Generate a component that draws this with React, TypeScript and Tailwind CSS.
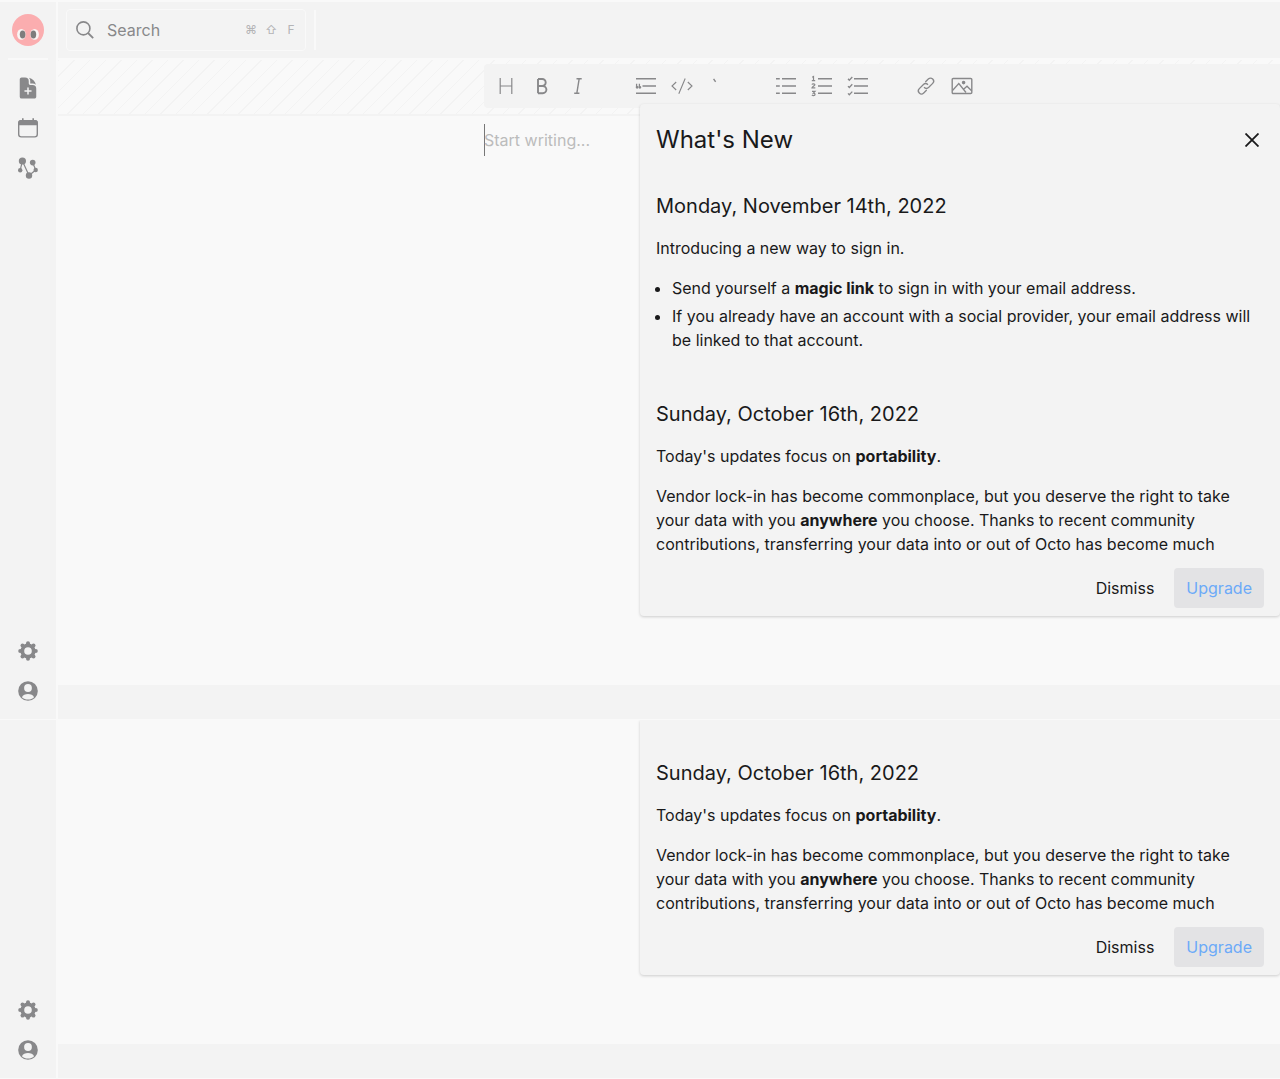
import type { ReactNode } from "react";
import { HiDocumentPlus } from "react-icons/hi2";

function Logo() {
  return (
    <svg viewBox="0 0 32 32" className="size-8" aria-hidden="true">
      <circle cx="16" cy="16" r="16" fill="#fbadaf" />
      <ellipse cx="9.4" cy="20.4" rx="4.3" ry="5.4" fill="#f9f5f4" />
      <ellipse cx="22.6" cy="20.4" rx="4.3" ry="5.4" fill="#f9f5f4" />
      <ellipse cx="10.6" cy="20.5" rx="2.8" ry="4" fill="#7d7d7d" />
      <ellipse cx="21.4" cy="20.5" rx="2.8" ry="4" fill="#7d7d7d" />
    </svg>
  );
}

function CalendarIcon() {
  return (
    <svg viewBox="0 0 24 24" className="size-6" fill="none" stroke="currentColor" aria-hidden="true">
      <rect x="2.7" y="4.7" width="18.6" height="16.2" rx="2.6" strokeWidth="1.4" />
      <path d="M2.2 9.2V7a3 3 0 0 1 3-3h13.6a3 3 0 0 1 3 3v2.2z" fill="currentColor" stroke="none" />
      <path d="M6.8 2.2V5M17.2 2.2V5" strokeWidth="1.6" />
    </svg>
  );
}

function GraphIcon() {
  return (
    <svg viewBox="0 0 24 24" className="size-6" fill="currentColor" stroke="currentColor" aria-hidden="true">
      <path d="M6.4 5 4.2 14.2M6.4 5 13 19.5M16.7 6.6l3 7.4L13 19.5" fill="none" strokeWidth="1.2" />
      <g stroke="none">
        <circle cx="6.4" cy="5" r="3.6" />
        <circle cx="16.7" cy="6.6" r="2.8" />
        <circle cx="4.2" cy="14.2" r="2.2" />
        <circle cx="19.7" cy="14" r="2.2" />
        <circle cx="13" cy="19.5" r="3.2" />
      </g>
    </svg>
  );
}

function GearIcon() {
  return (
    <svg viewBox="0 0 24 24" className="size-6" fill="currentColor" aria-hidden="true">
      <circle cx="12" cy="12" r="5.7" fill="none" stroke="currentColor" strokeWidth="3.8" />
      <circle cx="12" cy="4.2" r="2" />
      <circle cx="12" cy="19.8" r="2" />
      <circle cx="4.2" cy="12" r="2" />
      <circle cx="19.8" cy="12" r="2" />
      <circle cx="6.5" cy="6.5" r="2" />
      <circle cx="17.5" cy="6.5" r="2" />
      <circle cx="6.5" cy="17.5" r="2" />
      <circle cx="17.5" cy="17.5" r="2" />
    </svg>
  );
}

function AccountIcon() {
  return (
    <svg viewBox="0 0 24 24" className="size-6" aria-hidden="true">
      <circle cx="12" cy="12" r="9.8" fill="currentColor" />
      <circle cx="12" cy="9" r="3.9" fill="#f3f3f3" />
      <path d="M5.9 18.2c1-2 3.4-3.1 6.1-3.1s5.100 1.100 6.100 3.100c-1.600 1.600-3.800 2.400-6.100 2.400s-4.500-.8-6.100-2.400z" fill="#f3f3f3" />
    </svg>
  );
}

function SearchIcon() {
  return (
    <svg viewBox="0 0 20 20" className="size-5 shrink-0" fill="none" stroke="currentColor" aria-hidden="true">
      <circle cx="8.4" cy="8.400" r="6.500" strokeWidth="1.600" />
      <path d="M13 13l5.200 5.200" strokeWidth="1.800" />
    </svg>
  );
}

function SideButton({ label, children }: { label: string; children: ReactNode }) {
  return (
    <button type="button" aria-label={label} className="flex size-10 items-center justify-center text-[#88888a]">
      {children}
    </button>
  );
}

function AccountButtons() {
  return (
    <div className="flex flex-col items-center pb-2">
      <SideButton label="Settings"><GearIcon /></SideButton>
      <SideButton label="Account"><AccountIcon /></SideButton>
    </div>
  );
}

const rows = "M8 4.7h14M8 12h14M8 19.3h14";

const tools: { label: string; icon: ReactNode }[][] = [
  [
    { label: "Heading", icon: <path strokeWidth="1.2" d="M6.200 4v16M17.800 4v16M6.200 12h11.600" /> },
    { label: "Bold", icon: <path strokeWidth="1.9" d="M8 5v14.2M8 5h4.2a3.5 3.5 0 0 1 0 7H8M12.2 12h.6a3.6 3.6 0 0 1 0 7.2H8" /> },
    { label: "Italic", icon: <path strokeWidth="1.4" d="M10.5 4.7h5.2M8.2 19.3h5.2M13.2 4.7l-2.4 14.6" /> },
  ],
  [
    {
      label: "Quote",
      icon: (
        <>
          <path d="M2 4.7h20M8.5 12H22M2 19.3h20" />
          <path strokeWidth="1.3" d="M2.600 9.800v3.400M5.400 9.800v3.400" />
          <circle cx="3.100" cy="13.300" r=".7" />
          <circle cx="5.900" cy="13.300" r=".7" />
        </>
      ),
    },
    { label: "Code block", icon: <path strokeWidth="1.1" d="M6.2 8 2 12l4.2 4M17.8 8 22 12l-4.2 4M15.2 4.5 8.8 19.8" /> },
    { label: "Inline code", icon: <path strokeWidth="1.4" d="M7.6 4.8l2 3.1" /> },
  ],
  [
    { label: "Bulleted list", icon: <path d={`${rows}M2 4.7h3.8M2 12h3.8M2 19.3h3.8`} /> },
    {
      label: "Numbered list",
      icon: (
        <>
          <path d={rows} />
          <path
            strokeWidth="1.2"
            d="M2.2 3.3l1.3-.8v4.1M1.8 6.6h3.4M2 10.6c.2-.9 2.9-1 2.9.2 0 .9-2.7 1.7-2.9 3.1h3.3M2 17.4h3l-1.6 1.7c2.3 0 2.1 2.5.2 2.5-1 0-1.4-.3-1.7-.7"
          />
        </>
      ),
    },
    {
      label: "Task list",
      icon: (
        <>
          <path d={rows} />
          <path strokeWidth="1.3" d="M2 4.8l1.3 1.4 3-3.2M2 12.1l1.3 1.4 3-3.2M2 19.4l1.3 1.4 3-3.2" />
        </>
      ),
    },
  ],
  [
    {
      label: "Link",
      icon: (
        <path
          strokeWidth="1.3"
          d="M10 13.2a3.4 3.4 0 0 0 4.8.1l3.9-3.9a3.1 3.1 0 0 0-4.4-4.4l-3 3M14 10.8a3.4 3.4 0 0 0-4.8-.1l-3.9 3.9A3.1 3.1 0 0 0 9.7 19l3-3"
        />
      ),
    },
    {
      label: "Image",
      icon: (
        <>
          <rect x="2.2" y="4.5" width="19.6" height="15" rx="1" />
          <path strokeWidth="1.3" d="M2.5 16.5 8.8 9.6l7.2 8.9M13.6 15.2l3.4-3 4.8 4.8" />
          <circle cx="13.6" cy="8.6" r="1.1" fill="currentColor" />
        </>
      ),
    },
  ],
];

function Toolbar() {
  return (
    <div role="toolbar" aria-label="Formatting" className="flex h-11 min-w-0 items-center gap-8 overflow-hidden rounded-l bg-[#f3f3f3] px-1">
      {tools.map((group, i) => (
        <div key={i} className="flex shrink-0">
          {group.map((tool) => (
            <button key={tool.label} type="button" aria-label={tool.label} className="flex size-9 items-center justify-center text-[#88888a]">
              <svg viewBox="0 0 24 24" className="size-6" fill="none" stroke="currentColor" strokeWidth="1.4" aria-hidden="true">
                {tool.icon}
              </svg>
            </button>
          ))}
        </div>
      ))}
    </div>
  );
}

function OctoberEntry() {
  return (
    <article className="flex flex-col gap-4">
      <h2 className="text-xl leading-7">Sunday, October 16th, 2022</h2>
      <p>
        Today's updates focus on <strong>portability</strong>.
      </p>
      <p>
        Vendor lock-in has become commonplace, but you deserve the right to take your data with you{" "}
        <strong>anywhere</strong> you choose. Thanks to recent community contributions, transferring your data into or
        out of Octo has become much
      </p>
    </article>
  );
}

function Actions() {
  return (
    <div className="flex justify-end gap-2 pt-3 pb-2">
      <button type="button" className="h-10 rounded px-3">Dismiss</button>
      <button type="button" className="h-10 rounded bg-[#e3e3e5] px-3 text-[#6caaf8]">Upgrade</button>
    </div>
  );
}

function TopFrame() {
  return (
    <section className="relative flex min-h-[720px] border-b border-[#f9f9f9]">
      <nav aria-label="Main" className="mt-0.5 flex w-14 shrink-0 flex-col items-center justify-between bg-[#f3f3f3]">
        <div className="flex flex-col items-center pt-3">
          <a href="#home" aria-label="Octo home"><Logo /></a>
          <hr className="mt-3 mb-2 w-10 border-t-2 border-[#f9f9f9]" />
          <SideButton label="New note"><HiDocumentPlus className="size-6" /></SideButton>
          <SideButton label="Calendar"><CalendarIcon /></SideButton>
          <SideButton label="Graph"><GraphIcon /></SideButton>
        </div>
        <AccountButtons />
      </nav>
      <div className="mt-0.5 ml-0.5 flex min-w-0 flex-1 flex-col">
        <header className="flex h-14 items-center gap-2 bg-[#f3f3f3] px-2">
          <label className="flex h-[42px] w-60 items-center rounded border border-[#f9f9f9] px-2 text-[#88888a]">
            <SearchIcon />
            <input
              type="search"
              aria-label="Search"
              placeholder="Search"
              className="ml-3 w-24 flex-1 bg-transparent outline-none placeholder:text-[#88888a]"
            />
            <span className="flex gap-2 text-xs text-[#b4b4b6]">
              <kbd className="w-3 text-center font-[Inter,'DejaVu_Sans',sans-serif]">⌘</kbd>
              <kbd className="w-3 text-center font-[Inter,'DejaVu_Sans',sans-serif]">⇧</kbd>
              <kbd className="w-3 text-center font-[Inter,sans-serif]">F</kbd>
            </span>
          </label>
          <div className="h-10 w-0.5 bg-[#f9f9f9]" />
        </header>
        <div className="grid grid-cols-[minmax(0,426px)_minmax(0,1fr)] border-y-2 border-t-[#f9f9f9] border-b-[#f3f3f3] bg-[repeating-linear-gradient(-45deg,#f9f9f9_0,#f9f9f9_10px,#f3f3f3_10px,#f3f3f3_11px)] pt-1 pb-1.5">
          <div className="col-start-2"><Toolbar /></div>
        </div>
        <main className="grid flex-1 grid-cols-[minmax(0,426px)_minmax(0,1fr)] pt-2">
          <div
            role="textbox"
            aria-label="Note"
            tabIndex={0}
            className="col-start-2 h-8 leading-8 text-[#bcbcbc] shadow-[inset_1px_0_0_#777] outline-none"
          >
            Start writing...
          </div>
        </main>
        <footer className="h-[34px] bg-[#f3f3f3]" />
      </div>

      <div
        role="dialog"
        aria-labelledby="news-title"
        className="absolute top-[104px] right-0 w-1/2 rounded bg-[#f3f3f3] px-4 text-[#19191a] shadow-[0_1px_3px_rgba(0,0,0,0.18)]"
      >
        <header className="flex h-[72px] items-center justify-between">
          <h1 id="news-title" className="text-2xl">What's New</h1>
          <button type="button" aria-label="Close" className="flex size-6 items-center justify-center">
            <svg viewBox="0 0 14 14" className="size-3.5" stroke="currentColor" strokeWidth="1.8" aria-hidden="true">
              <path d="M.5.5l13 13M13.5.5l-13 13" />
            </svg>
          </button>
        </header>
        <div className="flex flex-col gap-12 pt-4">
          <article className="flex flex-col gap-4">
            <h2 className="text-xl leading-7">Monday, November 14th, 2022</h2>
            <p>Introducing a new way to sign in.</p>
            <ul className="flex list-disc flex-col gap-1 pl-4">
              <li>
                Send yourself a <strong>magic link</strong> to sign in with your email address.
              </li>
              <li>
                If you already have an account with a social provider, your email address will be linked to that
                account.
              </li>
            </ul>
          </article>
          <OctoberEntry />
        </div>
        <Actions />
      </div>
    </section>
  );
}

function BottomFrame() {
  return (
    <section className="relative flex border-b border-[#f9f9f9]">
      <nav aria-label="Account" className="flex w-14 shrink-0 flex-col justify-end bg-[#f3f3f3]">
        <AccountButtons />
      </nav>
      <div className="ml-0.5 flex min-w-0 flex-1 flex-col justify-end">
        <footer className="h-[34px] bg-[#f3f3f3]" />
      </div>
      <div
        role="dialog"
        aria-label="What's New, continued"
        className="absolute top-0 right-0 w-1/2 rounded-b bg-[#f3f3f3] px-4 pt-[39px] text-[#19191a] shadow-[0_1px_3px_rgba(0,0,0,0.18)] [clip-path:inset(0_-4px_-4px_-4px)]"
      >
        <OctoberEntry />
        <Actions />
      </div>
    </section>
  );
}

export default function App() {
  return (
    <div className="grid min-h-screen grid-rows-[auto_minmax(300px,1fr)] bg-[#f9f9f9] font-[Inter,sans-serif] text-base">
      <TopFrame />
      <BottomFrame />
    </div>
  );
}
